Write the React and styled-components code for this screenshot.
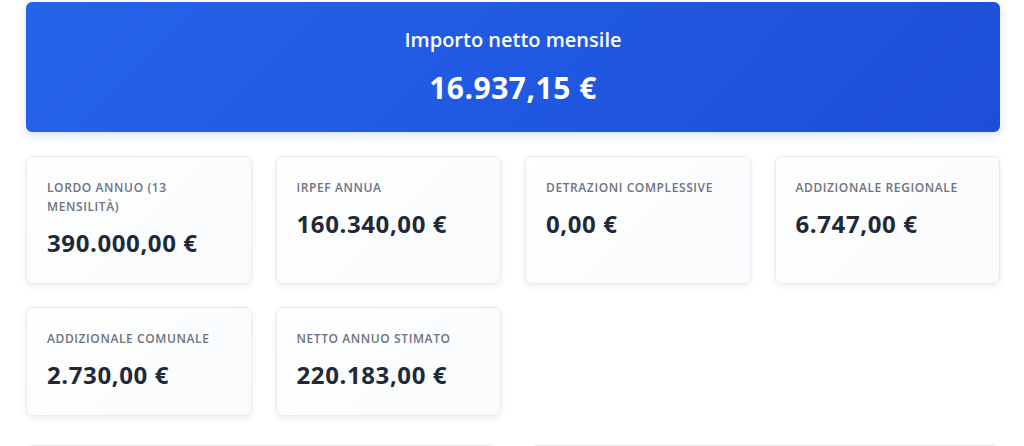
import React from "react";
import styled, { createGlobalStyle } from "styled-components";

const Global = createGlobalStyle`
  html, body { margin: 0; padding: 0; background: #ffffff; }
  body { font-family: "Open Sans", "Noto Sans", sans-serif; overflow: hidden; }
  * { box-sizing: border-box; }
`;

const Page = styled.div`
  padding: 2px 24px 0 26px;
  display: flex;
  flex-direction: column;
`;

const Hero = styled.section`
  background: linear-gradient(135deg, #2563eb 0%, #1d4ed8 100%);
  border-radius: 6px;
  box-shadow: 0 4px 10px rgba(37, 99, 235, 0.18);
  padding: 24px 24px 26px;
  text-align: center;
  color: #ffffff;
`;

const HeroTitle = styled.h2`
  margin: 0;
  font-size: 20px;
  line-height: 28px;
  font-weight: 600;
`;

const HeroValue = styled.div`
  margin-top: 16px;
  font-size: 30px;
  line-height: 36px;
  font-weight: 700;
  letter-spacing: 0.5px;
`;

const Grid = styled.div`
  display: grid;
  grid-template-columns: repeat(4, 1fr);
  gap: 23px 24px;
  margin-top: 24px;
`;

const Card = styled.div`
  background: linear-gradient(135deg, #ffffff 0%, #f8fafc 100%);
  border: 1px solid #e8ebef;
  border-radius: 7px;
  box-shadow: 0 2px 6px rgba(15, 23, 42, 0.08);
  padding: 21px 20px 22px;
`;

const Label = styled.div`
  font-size: 12px;
  line-height: 19px;
  text-transform: uppercase;
  letter-spacing: 0.05em;
  color: #6b7280;
  font-weight: 600;
`;

const Value = styled.div`
  margin-top: 9px;
  font-size: 24px;
  line-height: 36px;
  font-weight: 700;
  letter-spacing: 0.6px;
  color: #1f2937;
`;

const BottomRow = styled.div`
  display: grid;
  grid-template-columns: 1fr 1fr;
  gap: 32px;
  margin-top: 29px;
`;

const Panel = styled.div`
  height: 120px;
  background: #ffffff;
  border: 1px solid #e8ebef;
  border-radius: 8px;
  box-shadow: 0 2px 6px rgba(15, 23, 42, 0.08);
`;

const stats = [
  ["Lordo annuo (13 mensilità)", "390.000,00 €"],
  ["IRPEF annua", "160.340,00 €"],
  ["Detrazioni complessive", "0,00 €"],
  ["Addizionale regionale", "6.747,00 €"],
  ["Addizionale comunale", "2.730,00 €"],
  ["Netto annuo stimato", "220.183,00 €"],
];

export default function App() {
  return (
    <>
      <Global />
      <Page>
        <Hero>
          <HeroTitle>Importo netto mensile</HeroTitle>
          <HeroValue>16.937,15 €</HeroValue>
        </Hero>
        <Grid>
          {stats.map(([l, v]) => (
            <Card key={l}>
              <Label>{l}</Label>
              <Value>{v}</Value>
            </Card>
          ))}
        </Grid>
        <BottomRow>
          <Panel />
          <Panel />
        </BottomRow>
      </Page>
    </>
  );
}
